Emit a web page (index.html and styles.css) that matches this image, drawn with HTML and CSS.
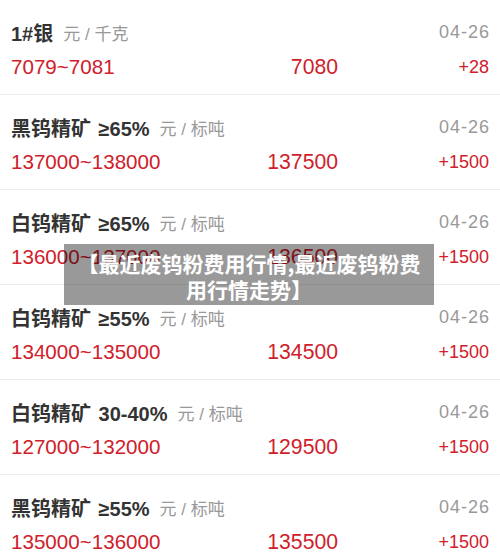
FILE: index.html
```html
<!DOCTYPE html>
<html lang="zh-CN">
<head>
<meta charset="utf-8">
<title>行情</title>
<link rel="stylesheet" href="styles.css">
</head>
<body>
<div class="page">
  <ul class="list">
    <li class="row">
      <div class="head"><span class="name">1#银</span><span class="unit">元 / 千克</span><span class="date">04-26</span></div>
      <div class="prices"><span class="range">7079~7081</span><span class="avg">7080</span><span class="chg">+28</span></div>
    </li>
    <li class="row">
      <div class="head"><span class="name">黑钨精矿 ≥65%</span><span class="unit">元 / 标吨</span><span class="date">04-26</span></div>
      <div class="prices"><span class="range">137000~138000</span><span class="avg">137500</span><span class="chg">+1500</span></div>
    </li>
    <li class="row">
      <div class="head"><span class="name">白钨精矿 ≥65%</span><span class="unit">元 / 标吨</span><span class="date">04-26</span></div>
      <div class="prices"><span class="range">136000~137000</span><span class="avg">136500</span><span class="chg">+1500</span></div>
    </li>
    <li class="row">
      <div class="head"><span class="name">白钨精矿 ≥55%</span><span class="unit">元 / 标吨</span><span class="date">04-26</span></div>
      <div class="prices"><span class="range">134000~135000</span><span class="avg">134500</span><span class="chg">+1500</span></div>
    </li>
    <li class="row">
      <div class="head"><span class="name">白钨精矿 30-40%</span><span class="unit">元 / 标吨</span><span class="date">04-26</span></div>
      <div class="prices"><span class="range">127000~132000</span><span class="avg">129500</span><span class="chg">+1500</span></div>
    </li>
    <li class="row">
      <div class="head"><span class="name">黑钨精矿 ≥55%</span><span class="unit">元 / 标吨</span><span class="date">04-26</span></div>
      <div class="prices"><span class="range">135000~136000</span><span class="avg">135500</span><span class="chg">+1500</span></div>
    </li>
  </ul>
  <div class="caption">【最近废钨粉费用行情,最近废钨粉费用行情走势】</div>
</div>
</body>
</html>
```
FILE: styles.css
```css
* { box-sizing: border-box; }
html, body {
  margin: 0;
  padding: 0;
  background: #fff;
}
body {
  font-family: "Liberation Sans", "Noto Sans CJK SC", sans-serif;
  width: 500px;
  height: 552px;
  overflow: hidden;
}
.page {
  position: relative;
}
.list {
  list-style: none;
  margin: 0;
  padding: 0;
}
.row {
  height: 95px;
  padding: 20px 11px 0 11px;
  border-bottom: 1px solid #ededed;
}
.head {
  display: flex;
  align-items: center;
  height: 24px;
}
.name {
  font-size: 20px;
  font-weight: bold;
  color: #333;
  word-spacing: 2px;
}
.unit {
  font-size: 17px;
  color: #999;
  margin-left: 10px;
}
.date {
  margin-left: auto;
  font-size: 18px;
  letter-spacing: 1px;
  margin-right: -1px;
  color: #999;
}
.prices {
  display: grid;
  grid-template-columns: auto 1fr 151px;
  align-items: center;
  height: 24px;
  margin-top: 11px;
  color: #d0202b;
}
.range {
  font-size: 20.6px;
}
.avg {
  font-size: 21.2px;
  text-align: right;
}
.chg {
  font-size: 18px;
  text-align: right;
}
.caption {
  position: absolute;
  left: 64px;
  top: 244px;
  width: 370px;
  height: 61px;
  padding: 6px 12px 0;
  background: rgba(0, 0, 0, 0.4);
  color: #fff;
  font-family: "Noto Sans CJK SC", sans-serif;
  font-weight: bold;
  font-size: 21px;
  line-height: 26px;
  text-align: center;
}
```
